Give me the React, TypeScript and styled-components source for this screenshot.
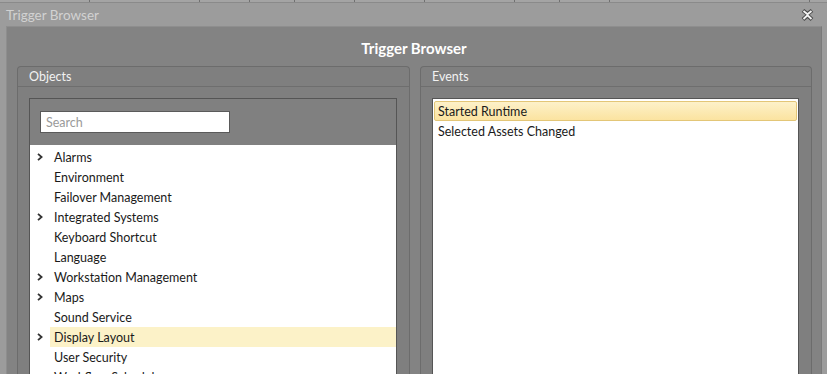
import React from "react"
import styled, { createGlobalStyle } from "styled-components"

const GlobalStyle = createGlobalStyle`
  html, body {
    margin: 0;
    padding: 0;
    background: #9c9c9c;
    overflow: hidden;
  }
  * {
    box-sizing: border-box;
  }
`

const font = `Lato, "Noto Sans", sans-serif`

const TopStrip = styled.div`
  height: 3px;
  overflow: hidden;
  display: flex;
  background: #a4a4a4;
  border-bottom: 1px solid #8a8a8a;
`
const StripCell = styled.div<{ w: number }>`
  width: ${({ w }) => w}px;
  flex: none;
  border-right: 1px solid #707070;
`

const Frame = styled.div`
  padding: 0 5px 0 6px;
  background: #9c9c9c;
  height: 371px;
  display: flex;
  flex-direction: column;
`
const TitleBar = styled.div`
  height: 23px;
  flex: none;
  display: flex;
  align-items: center;
  justify-content: space-between;
  padding-right: 8px;
  font: 13.5px ${font};
  color: #d2d2d2;
`
const Body = styled.div`
  flex: 1;
  background: #838383;
  border-left: 1px solid #8e8e8e;
  border-top: 1px solid #8e8e8e;
  border-right: 1px solid #7a7a7a;
  padding: 0 10px;
  display: flex;
  flex-direction: column;
  overflow: hidden;
`
const Heading = styled.div`
  height: 39px;
  flex: none;
  display: flex;
  align-items: center;
  justify-content: center;
  padding-top: 2px;
  font: bold 15px ${font};
  color: #ffffff;
`
const Columns = styled.div`
  flex: 1;
  display: grid;
  grid-template-columns: 393px 392px;
  gap: 10px;
`
const Panel = styled.div`
  border: 1px solid #6c6c6c;
  border-bottom: none;
  border-radius: 4px 4px 0 0;
  background: #7f7f7f;
  display: flex;
  flex-direction: column;
`
const PanelHeader = styled.div`
  height: 20px;
  flex: none;
  display: flex;
  align-items: center;
  padding-left: 11px;
  border-bottom: 1px solid #6e6e6e;
  font: 12.5px ${font};
  color: #f2f2f2;
`
const PanelContent = styled.div`
  flex: 1;
  padding: 11px 12px 0 11px;
  display: flex;
  flex-direction: column;
`
const InnerBox = styled.div<{ white?: boolean }>`
  flex: 1;
  border: 1px solid #555555;
  border-bottom: none;
  background: ${({ white }) => (white ? "#ffffff" : "#808080")};
  display: flex;
  flex-direction: column;
`
const SearchArea = styled.div`
  height: 46px;
  flex: none;
  padding: 12px 0 0 10px;
`
const SearchInput = styled.input`
  width: 190px;
  height: 22px;
  border: 1px solid #5a5a5a;
  background: #ffffff;
  padding: 0 5px;
  font: 12.5px ${font};
  outline: none;
  &::placeholder {
    color: #9a9a9a;
  }
`
const List = styled.div`
  flex: 1;
  background: #ffffff;
  padding-top: 2px;
`
const TreeRow = styled.div`
  height: 20px;
  display: flex;
  align-items: center;
  padding-left: 7px;
`
const Chevron = styled.div`
  width: 13px;
  height: 20px;
  flex: none;
  display: flex;
  align-items: center;
`
const TreeLabel = styled.div<{ selected?: boolean }>`
  flex: 1;
  height: 20px;
  display: flex;
  align-items: center;
  padding-left: 4px;
  font: 12.5px ${font};
  color: #1a1a1a;
  background: ${({ selected }) => (selected ? "#fcf2c8" : "transparent")};
`
const EventRow = styled.div<{ selected?: boolean }>`
  height: 20px;
  margin: 0 1px;
  &:first-child {
    margin-top: 2px;
  }
  display: flex;
  align-items: center;
  padding-left: 3px;
  font: 12.5px ${font};
  color: #1a1a1a;
  border: 1px solid ${({ selected }) => (selected ? "#e3c677" : "transparent")};
  border-radius: 2px;
  background: ${({ selected }) =>
    selected ? "linear-gradient(to bottom, #fdf1c9, #fbe3a0)" : "transparent"};
`

const CloseIcon = () => (
  <svg width="13" height="12" viewBox="0 0 13 12">
    <path
      d="M2 1.5 L6.5 5 L11 1.5 M2 10.5 L6.5 6.5 L11 10.5"
      fill="none"
      stroke="#4a4a4a"
      strokeWidth="4"
      strokeLinejoin="round"
    />
    <path
      d="M2.5 2 L6.5 5.3 L10.5 2 M2.5 10 L6.5 6.3 L10.5 10"
      fill="none"
      stroke="#f4f4f4"
      strokeWidth="1.8"
    />
  </svg>
)

const ChevronIcon = () => (
  <svg width="6" height="8" viewBox="0 0 6 8">
    <path d="M1 0.8 L4.6 4 L1 7.2" fill="none" stroke="#333" strokeWidth="1.8" />
  </svg>
)

const objects: { name: string; expandable?: boolean; selected?: boolean }[] = [
  { name: "Alarms", expandable: true },
  { name: "Environment" },
  { name: "Failover Management" },
  { name: "Integrated Systems", expandable: true },
  { name: "Keyboard Shortcut" },
  { name: "Language" },
  { name: "Workstation Management", expandable: true },
  { name: "Maps", expandable: true },
  { name: "Sound Service" },
  { name: "Display Layout", expandable: true, selected: true },
  { name: "User Security" },
  { name: "Workflow Scheduler" },
]

const events = [
  { name: "Started Runtime", selected: true },
  { name: "Selected Assets Changed" },
]

const stripCells = [90, 110, 50, 45, 60, 70, 90, 45, 50, 200]

export default function App() {
  return (
    <>
      <GlobalStyle />
      <TopStrip>
        {stripCells.map((w, i) => (
          <StripCell key={i} w={w} />
        ))}
      </TopStrip>
      <Frame>
        <TitleBar>
          <span>Trigger Browser</span>
          <CloseIcon />
        </TitleBar>
        <Body>
          <Heading>Trigger Browser</Heading>
          <Columns>
            <Panel>
              <PanelHeader>Objects</PanelHeader>
              <PanelContent>
                <InnerBox>
                  <SearchArea>
                    <SearchInput placeholder="Search" />
                  </SearchArea>
                  <List>
                    {objects.map((o) => (
                      <TreeRow key={o.name}>
                        <Chevron>{o.expandable && <ChevronIcon />}</Chevron>
                        <TreeLabel selected={o.selected}>{o.name}</TreeLabel>
                      </TreeRow>
                    ))}
                  </List>
                </InnerBox>
              </PanelContent>
            </Panel>
            <Panel>
              <PanelHeader>Events</PanelHeader>
              <PanelContent>
                <InnerBox white>
                  {events.map((e) => (
                    <EventRow key={e.name} selected={e.selected}>
                      {e.name}
                    </EventRow>
                  ))}
                </InnerBox>
              </PanelContent>
            </Panel>
          </Columns>
        </Body>
      </Frame>
    </>
  )
}
